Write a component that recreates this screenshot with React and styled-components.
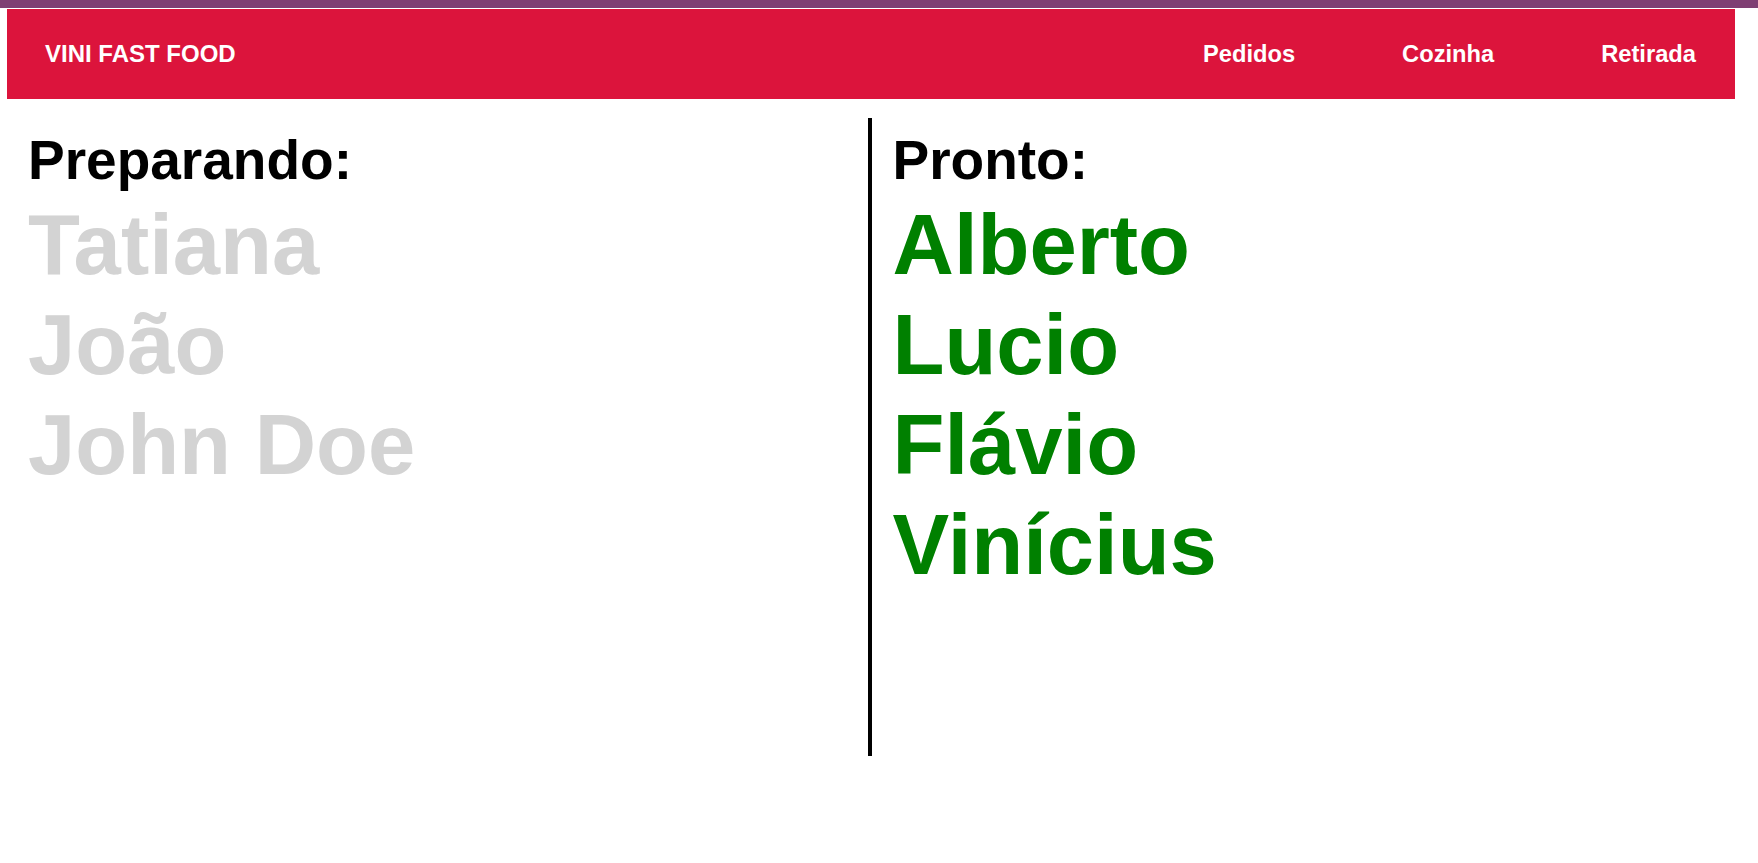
import React from "react";
import styled, { createGlobalStyle } from "styled-components";

const GlobalStyle = createGlobalStyle`
  * {
    box-sizing: border-box;
  }
  html, body {
    margin: 0;
    padding: 0;
    background: #ffffff;
    font-family: "Liberation Sans", Arial, Helvetica, sans-serif;
  }
`;

const TopStrip = styled.div`
  height: 8px;
  background: #7f3f73;
`;

const Page = styled.div`
  padding: 1px 23px 0 7px;
`;

const Header = styled.header`
  height: 90px;
  background: #dc143c;
  display: flex;
  align-items: center;
  justify-content: space-between;
  padding: 0 39px 0 38px;
`;

const Brand = styled.span`
  color: #ffffff;
  font-weight: bold;
  font-size: 24px;
`;

const Nav = styled.nav`
  display: flex;
  gap: 107px;
`;

const NavLink = styled.a`
  color: #ffffff;
  font-weight: bold;
  font-size: 23.7px;
  text-decoration: none;
  cursor: pointer;
`;

const Board = styled.main`
  display: grid;
  grid-template-columns: 1fr 1fr;
  padding: 19px 19px 0 20px;
`;

const Column = styled.section`
  height: 638px;
  padding: 11px 0 0 ${({ $first }) => ($first ? "1px" : "21px")};
  border-right: ${({ $first }) => ($first ? "4px solid #000" : "none")};
`;

const Title = styled.h2`
  margin: 0 0 4px 0;
  font-size: 55px;
  font-weight: bold;
  color: #000000;
  line-height: 62px;
`;

const Name = styled.div`
  font-size: 85px;
  font-weight: bold;
  line-height: 100px;
  color: ${({ $ready }) => ($ready ? "#008000" : "#d3d3d3")};
`;

const preparing = ["Tatiana", "João", "John Doe"];
const ready = ["Alberto", "Lucio", "Flávio", "Vinícius"];

export default function App() {
  return (
    <>
      <GlobalStyle />
      <TopStrip />
      <Page>
        <Header>
          <Brand>VINI FAST FOOD</Brand>
          <Nav>
            <NavLink>Pedidos</NavLink>
            <NavLink>Cozinha</NavLink>
            <NavLink>Retirada</NavLink>
          </Nav>
        </Header>
        <Board>
          <Column $first>
            <Title>Preparando:</Title>
            {preparing.map((n) => (
              <Name key={n}>{n}</Name>
            ))}
          </Column>
          <Column>
            <Title>Pronto:</Title>
            {ready.map((n) => (
              <Name key={n} $ready>
                {n}
              </Name>
            ))}
          </Column>
        </Board>
      </Page>
    </>
  );
}
